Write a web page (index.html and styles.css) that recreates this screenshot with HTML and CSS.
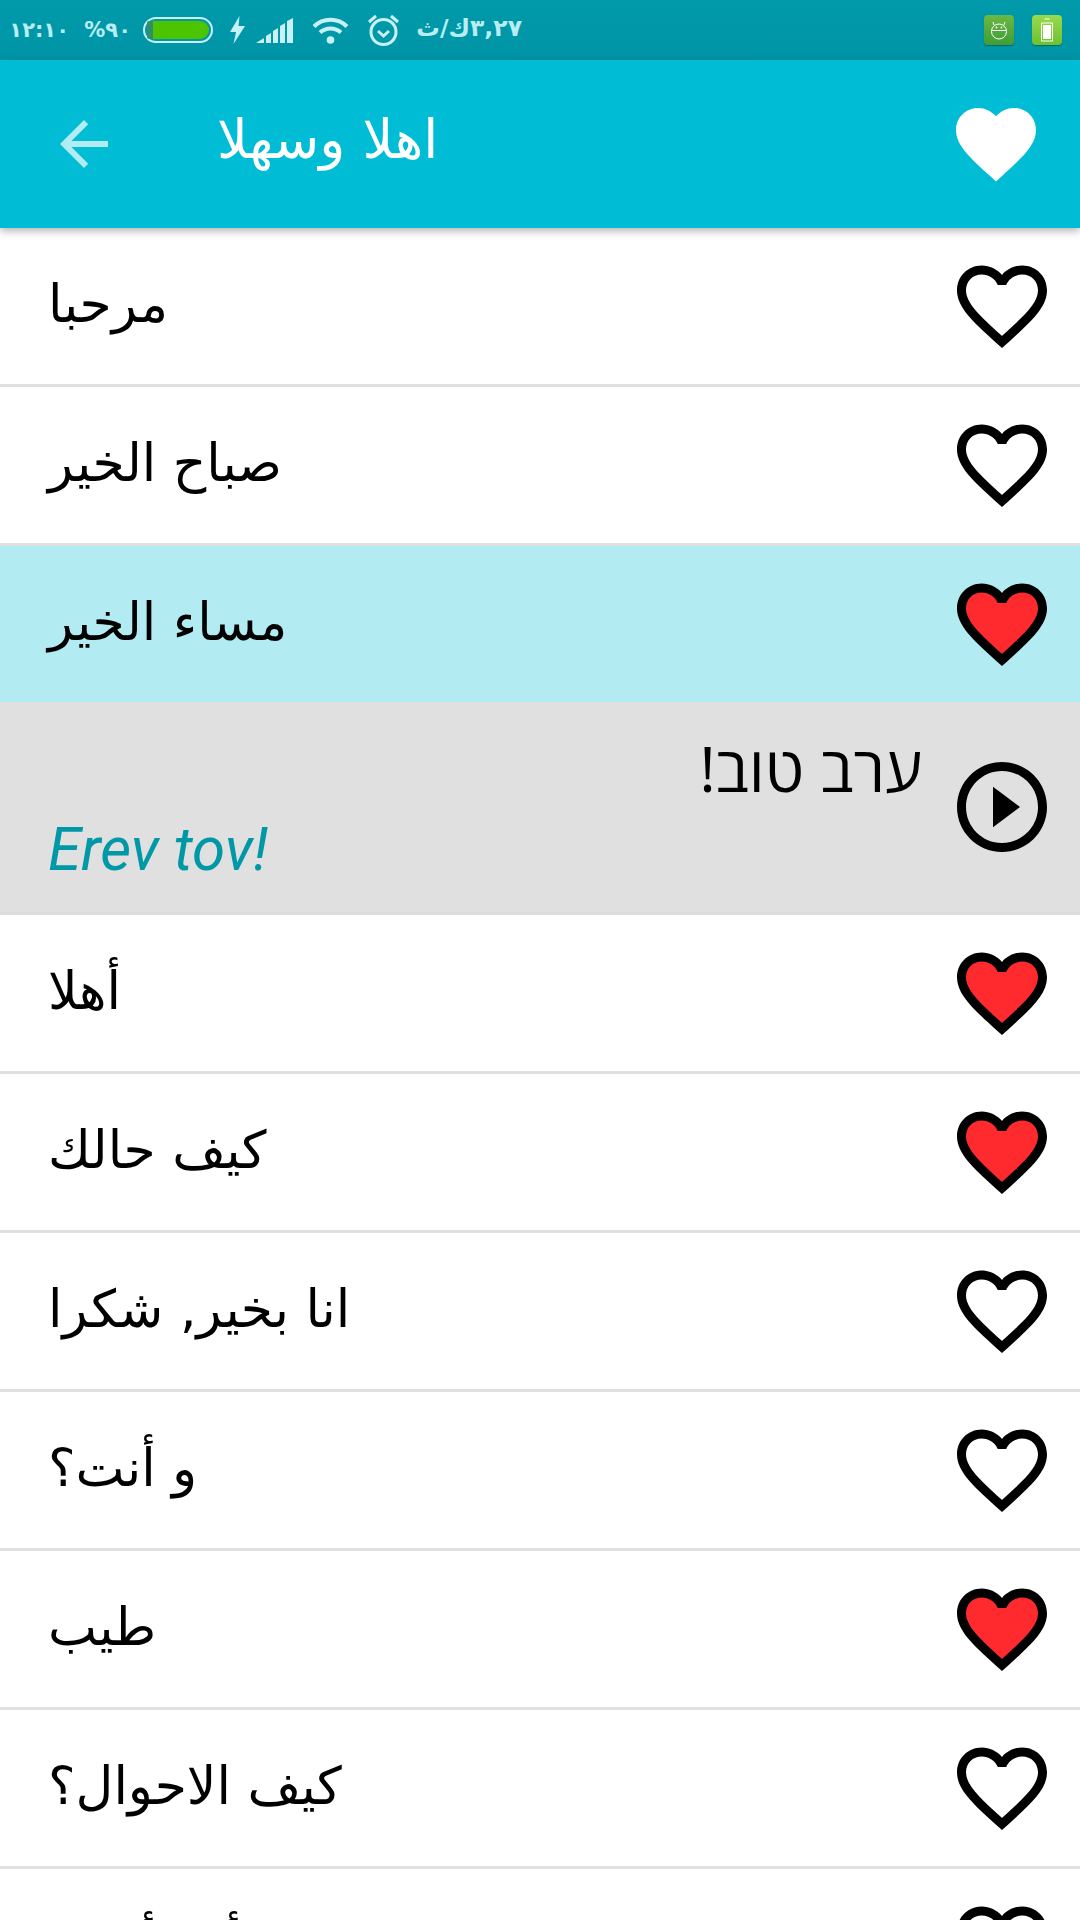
FILE: index.html
```html
<!DOCTYPE html>
<html lang="ar">
<head>
<meta charset="utf-8">
<title>اهلا وسهلا</title>
<link rel="stylesheet" href="styles.css">
</head>
<body dir="ltr">
<svg class="defs" width="0" height="0" aria-hidden="true">
  <symbol id="heart-outline" viewBox="0 0 24 24"><path d="M16.5 3c-1.74 0-3.41.81-4.5 2.09C10.91 3.81 9.24 3 7.5 3 4.42 3 2 5.42 2 8.5c0 3.78 3.4 6.86 8.55 11.54L12 21.35l1.45-1.32C18.6 15.36 22 12.28 22 8.5 22 5.42 19.58 3 16.5 3zm-4.4 15.55l-.1.1-.1-.1C7.14 14.24 4 11.39 4 8.5 4 6.5 5.5 5 7.5 5c1.54 0 3.04.99 3.57 2.36h1.87C13.46 5.99 14.96 5 16.5 5c2 0 3.5 1.5 3.5 3.5 0 2.89-3.14 5.74-7.9 10.05z"/></symbol>
  <symbol id="heart-red" viewBox="0 0 24 24"><path fill="#ff2a2d" d="M12 19.2C7 14.6 3.5 11.6 3.5 8.5 3.5 6 5.2 4.2 7.5 4.2c1.8 0 3.6 1.1 4.5 3 .9-1.9 2.7-3 4.5-3 2.3 0 4 1.8 4 4.3 0 3.1-3.5 6.1-8.5 10.7z"/><path d="M16.5 3c-1.74 0-3.41.81-4.5 2.09C10.91 3.81 9.24 3 7.5 3 4.42 3 2 5.42 2 8.5c0 3.78 3.4 6.86 8.55 11.54L12 21.35l1.45-1.32C18.6 15.36 22 12.28 22 8.5 22 5.42 19.58 3 16.5 3zm-4.4 15.55l-.1.1-.1-.1C7.14 14.24 4 11.39 4 8.5 4 6.5 5.5 5 7.5 5c1.54 0 3.04.99 3.57 2.36h1.87C13.46 5.99 14.96 5 16.5 5c2 0 3.5 1.5 3.5 3.5 0 2.89-3.14 5.74-7.9 10.05z"/></symbol>
  <symbol id="play" viewBox="0 0 24 24"><path d="M10 16.5l6-4.5-6-4.5v9zM12 2C6.48 2 2 6.48 2 12s4.48 10 10 10 10-4.48 10-10S17.52 2 12 2zm0 18c-4.41 0-8-3.59-8-8s3.59-8 8-8 8 3.59 8 8-3.59 8-8 8z"/></symbol>
</svg>

<div class="screen">
  <header class="statusbar">
    <span class="st st-time" dir="rtl">١٢:١٠</span>
    <span class="st st-pct" dir="rtl">٩٠%</span>
    <span class="battery"><span class="battery-fill"></span></span>
    <svg class="ic-bolt" viewBox="0 0 16 28"><path d="M10.5 0 1 16h6l-2.500 12L16 10H9.500z"/></svg>
    <svg class="ic-signal" viewBox="0 0 37 25"><path d="M0 25l8-5v5zM10 18l5-3v10h-5zM17 13l5-3v15h-5zM24 8l5-3v20h-5zM31 3l6-3v25h-6z"/></svg>
    <svg class="ic-wifi" viewBox="0 0 37 28"><path class="arc" d="M2 10.500C11 1.500 26 1.500 35 10.500M8 16.500c6-5.500 15-5.500 21 0"/><circle cx="18.500" cy="24" r="3.800"/></svg>
    <svg class="ic-alarm" viewBox="0 0 33 32"><g class="line"><circle cx="16.500" cy="18" r="12.500"/><path d="M11 17l5.500 5 5.500-5M2 8l7-6M31 8l-7-6"/></g></svg>
    <span class="st st-speed" dir="rtl">٣,٢٧ك/ث</span>
    <span class="spacer"></span>
    <span class="badge badge-a">
      <svg viewBox="0 0 18 20"><g class="badge-line"><circle cx="9" cy="11.500" r="7.500"/><path d="M2 10.500h14M4 5 3 2M14 5l1-3"/></g><circle cx="6.500" cy="7.500" r=".9" fill="#fff"/><circle cx="11.500" cy="7.500" r=".9" fill="#fff"/></svg>
    </span>
    <span class="badge badge-b">
      <svg viewBox="0 0 14 24"><path class="badge-line" d="M1.500 5h11v18h-11zM4.500 1h5"/><rect x="3" y="7" width="8" height="14" fill="#fff"/></svg>
    </span>
  </header>

  <div class="toolbar">
    <svg class="ic-back" viewBox="0 0 24 24"><path d="M20 11H7.830l5.590-5.590L12 4l-8 8 8 8 1.410-1.410L7.830 13H20v-2z"/></svg>
    <h1 class="title" dir="rtl">اهلا وسهلا</h1>
    <span class="spacer"></span>
    <svg class="ic-fav" viewBox="0 0 24 24"><path d="M12 21.350l-1.450-1.320C5.400 15.360 2 12.280 2 8.500 2 5.420 4.420 3 7.500 3c1.740 0 3.410.81 4.500 2.090C13.090 3.810 14.760 3 16.500 3 19.580 3 22 5.420 22 8.500c0 3.780-3.400 6.860-8.550 11.540L12 21.350z"/></svg>
  </div>

  <main class="list">
    <div class="row"><span class="phrase" dir="rtl">مرحبا</span><svg class="ic"><use href="#heart-outline"/></svg></div>
    <div class="row"><span class="phrase" dir="rtl">صباح الخير</span><svg class="ic"><use href="#heart-outline"/></svg></div>
    <div class="row row-active"><span class="phrase" dir="rtl">مساء الخير</span><svg class="ic"><use href="#heart-red"/></svg></div>
    <div class="row row-open">
      <div class="translation">
        <span class="hebrew" dir="rtl">ערב טוב!</span>
        <span class="translit">Erev tov!</span>
      </div>
      <svg class="ic ic-play"><use href="#play"/></svg>
    </div>
    <div class="row"><span class="phrase" dir="rtl">أهلا</span><svg class="ic"><use href="#heart-red"/></svg></div>
    <div class="row"><span class="phrase" dir="rtl">كيف حالك</span><svg class="ic"><use href="#heart-red"/></svg></div>
    <div class="row"><span class="phrase" dir="rtl">انا بخير, شكرا</span><svg class="ic"><use href="#heart-outline"/></svg></div>
    <div class="row"><span class="phrase" dir="rtl">و أنت؟</span><svg class="ic"><use href="#heart-outline"/></svg></div>
    <div class="row"><span class="phrase" dir="rtl">طيب</span><svg class="ic"><use href="#heart-red"/></svg></div>
    <div class="row"><span class="phrase" dir="rtl">كيف الاحوال؟</span><svg class="ic"><use href="#heart-outline"/></svg></div>
    <div class="row"><span class="phrase" dir="rtl">من أين أنت؟</span><svg class="ic"><use href="#heart-outline"/></svg></div>
  </main>
</div>
</body>
</html>
```

FILE: styles.css
```css
html, body { margin: 0; padding: 0; background: #fff; }
.defs { display: block; height: 0; }
.screen {
  width: 1080px;
  height: 1920px;
  overflow: hidden;
  display: flex;
  flex-direction: column;
  font-family: "DejaVu Sans", sans-serif;
}
.spacer { flex: 1; }

/* status bar */
.statusbar {
  flex: none;
  height: 60px;
  box-sizing: border-box;
  padding: 0 18px 0 19px;
  display: flex;
  align-items: center;
  background: linear-gradient(#009aab, #0095a6);
  color: #b8edf3;
}
.st { font-size: 21px; font-weight: 700; line-height: 30px; white-space: nowrap; text-align: center; }
.st-time { flex: none; width: 50px; letter-spacing: -1px; }
.st-pct { flex: none; width: 41px; margin-left: 21px; letter-spacing: -1px; }
.battery {
  flex: none;
  margin-left: 12px;
  width: 70px;
  height: 26px;
  box-sizing: border-box;
  border: 2px solid #c8f1f6;
  border-radius: 13px;
  padding: 2px;
  display: flex;
}
.battery-fill {
  flex: 1;
  border-radius: 2px 9px 9px 2px;
  background: #4cc400;
  border-left: 6px solid #2f8f6c;
}
.ic-bolt { flex: none; margin-left: 16px; width: 16px; height: 28px; fill: #c8f1f6; }
.ic-signal { flex: none; margin-left: 11px; width: 37px; height: 25px; fill: #c8f1f6; }
.ic-wifi { flex: none; margin-left: 19px; width: 37px; height: 28px; fill: #c8f1f6; }
.arc { fill: none; stroke: #c8f1f6; stroke-width: 4; }
.ic-alarm { flex: none; margin-left: 18px; width: 33px; height: 32px; }
.line { fill: none; stroke: #c8f1f6; stroke-width: 3; }
.st-speed { flex: none; margin: 0 0 4px 18px; width: 104px; font-size: 23.5px; }
.badge {
  width: 30px;
  height: 30px;
  border-radius: 4px;
  display: flex;
  align-items: center;
  justify-content: center;
  box-shadow: 0 1px 1px rgba(0, 70, 60, .6);
}
.badge-a { background: linear-gradient(#6ab845, #3f9e35); }
.badge-b { margin-left: 18px; background: linear-gradient(#9ad94e, #6cc22e); }
.badge-a svg { width: 18px; height: 20px; }
.badge-b svg { width: 14px; height: 24px; }
.badge-line { fill: none; stroke: #fff; stroke-width: 1; }

/* toolbar */
.toolbar {
  flex: none;
  position: relative;
  z-index: 1;
  height: 168px;
  box-sizing: border-box;
  padding: 0 36px 0 48px;
  display: flex;
  align-items: center;
  background: #00bcd4;
  box-shadow: 0 3px 8px rgba(0, 0, 0, .3);
}
.ic-back { width: 72px; height: 72px; fill: #b2ebf2; }
.title {
  margin: 0 0 8px 97px;
  font-size: 54px;
  font-weight: 400;
  line-height: 60px;
  color: #fff;
}
.ic-fav { width: 96px; height: 96px; fill: #fff; }

/* list */
.list { flex: none; }
.row {
  height: 159px;
  box-sizing: border-box;
  padding: 0 24px 0 48px;
  display: flex;
  align-items: center;
  justify-content: space-between;
  background: #fff;
  border-bottom: 3px solid #e0e0e0;
}
.row-active { background: #b2ebf2; }
.row-open { height: 210px; background: #e0e0e0; border-bottom-color: #dcdcdc; }
.phrase { margin-bottom: 4px; font-size: 52px; line-height: 70px; color: #000; }
.ic { flex: none; width: 108px; height: 108px; fill: #000; }
.ic-play { margin-bottom: 3px; }
.translation {
  flex: 1;
  margin-right: 26px;
  display: flex;
  flex-direction: column;
}
.hebrew {
  font-family: "Open Sans", "DejaVu Sans", sans-serif;
  font-size: 63px;
  line-height: 80px;
  color: #000;
}
.translit {
  margin-top: 2px;
  font-family: Roboto, sans-serif;
  font-style: italic;
  font-size: 60px;
  line-height: 80px;
  color: #0097a7;
}
```
